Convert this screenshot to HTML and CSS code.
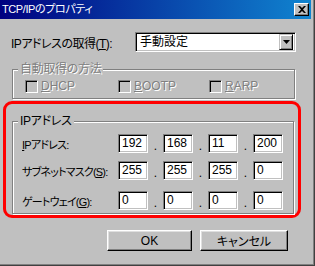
FILE: index.html
```html
<!DOCTYPE html>
<html lang="ja">
<head>
  <meta charset="UTF-8"/>
  <title>TCP/IPのプロパティ</title>
  <link rel="stylesheet" href="styles.css">
</head>
<body>
  <div class="window">
    <div class="titlebar">
      <span class="title">TCP/IPのプロパティ</span>
      <span class="close-btn">
        <svg width="8" height="7" viewBox="0 0 8 7">
          <path d="M0 0 L2 0 L4 2 L6 0 L8 0 L5 3.5 L8 7 L6 7 L4 5 L2 7 L0 7 L3 3.5 Z" fill="#000"/>
        </svg>
      </span>
    </div>

    <div class="mode-row">
      <span class="mode-label">IPアドレスの取得(<u>T</u>):</span>
      <div class="combo">
        <span class="combo-value">手動設定</span>
        <span class="combo-btn">
          <svg width="7" height="4" viewBox="0 0 7 4"><path d="M0 0 H7 L3.5 4 Z" fill="#000"/></svg>
        </span>
      </div>
    </div>

    <!-- disabled group -->
    <fieldset class="group group-auto">
      <legend class="disabled">自動取得の方法</legend>
      <div class="check-row">
        <span class="check"><span class="box"></span><span class="disabled"><u>D</u>HCP</span></span>
        <span class="check"><span class="box"></span><span class="disabled"><u>B</u>OOTP</span></span>
        <span class="check"><span class="box"></span><span class="disabled"><u>R</u>ARP</span></span>
      </div>
    </fieldset>

    <div class="highlight">
      <fieldset class="group group-ip">
        <legend>IPアドレス</legend>

        <div class="ip-row">
          <span class="ip-label"><u>I</u>Pアドレス:</span>
          <div class="ip-fields">
            <span class="octet">192</span><span class="dot">.</span>
            <span class="octet">168</span><span class="dot">.</span>
            <span class="octet">11</span><span class="dot">.</span>
            <span class="octet">200</span>
          </div>
        </div>

        <div class="ip-row">
          <span class="ip-label">サブネットマスク(<u>S</u>):</span>
          <div class="ip-fields">
            <span class="octet">255</span><span class="dot">.</span>
            <span class="octet">255</span><span class="dot">.</span>
            <span class="octet">255</span><span class="dot">.</span>
            <span class="octet">0</span>
          </div>
        </div>

        <div class="ip-row row-gateway">
          <span class="ip-label">ゲートウェイ(<u>G</u>):</span>
          <div class="ip-fields">
            <span class="octet">0</span><span class="dot">.</span>
            <span class="octet">0</span><span class="dot">.</span>
            <span class="octet">0</span><span class="dot">.</span>
            <span class="octet">0</span>
          </div>
        </div>
      </fieldset>
    </div>

    <div class="buttons">
      <button class="btn btn-ok">OK</button>
      <button class="btn btn-cancel">キャンセル</button>
    </div>
  </div>
</body>
</html>
```

FILE: styles.css
```css
:root {
  --face:   #c0c0c0;
  --shadow: #808080;
  --dark:   #404040;
  --light:  #ffffff;
  --font:   "Liberation Sans", "Noto Sans CJK JP", sans-serif;
}

* {
  box-sizing: border-box;
  margin: 0;
  padding: 0;
}

body {
  background: var(--face);
  font-family: var(--font);
  font-size: 12px;
  font-feature-settings: "palt";
  color: #000;
  white-space: nowrap;
}

u { text-decoration: underline; text-underline-offset: 1px; }

.window {
  width: 315px;
  height: 266px;
  background: var(--face);
  border-right: 1px solid var(--dark);
  border-bottom: 1px solid var(--dark);
  box-shadow: inset -1px -1px 0 var(--shadow);
  overflow: hidden;
}

/* Title bar */
.titlebar {
  display: flex;
  align-items: center;
  justify-content: space-between;
  height: 19px;
  margin-right: 3px;
  padding: 0 2px;
  background: linear-gradient(to right, #000080, #1084d0);
}
.title {
  color: #fff;
  font-size: 11px;
  line-height: 19px;
  letter-spacing: -0.4px;
}
.close-btn {
  display: flex;
  align-items: center;
  justify-content: center;
  width: 15px;
  height: 13px;
  background: var(--face);
  border: 1px solid;
  border-color: var(--light) #000 #000 var(--light);
  box-shadow: inset -1px -1px 0 var(--shadow);
}

/* Sunken field */
.combo,
.octet {
  background: #fff;
  border: 1px solid;
  border-color: var(--shadow) var(--light) var(--light) var(--shadow);
  box-shadow: inset 1px 1px 0 #000, inset -1px -1px 0 var(--face);
}

/* Obtain mode row */
.mode-row {
  display: flex;
  align-items: center;
  height: 20px;
  margin-top: 13px;
}
.mode-label {
  width: 135px;
  padding-left: 11px;
  letter-spacing: -0.5px;
}
.combo {
  display: flex;
  align-items: center;
  justify-content: space-between;
  width: 161px;
  height: 20px;
  padding: 2px;
}
.combo-value { padding-left: 2px; line-height: 16px; }
.combo-btn {
  display: flex;
  align-items: center;
  justify-content: center;
  width: 14px;
  height: 16px;
  background: var(--face);
  border: 1px solid;
  border-color: var(--face) #000 #000 var(--face);
  box-shadow: inset 1px 1px 0 var(--light), inset -1px -1px 0 var(--shadow);
}

/* Group boxes */
.group {
  border: 1px solid var(--shadow);
  box-shadow: 1px 1px 0 var(--light), inset 1px 1px 0 var(--light);
  padding: 0 5px;
}
.group legend {
  padding: 0 2px;
  line-height: 14px;
  letter-spacing: -0.3px;
  background: var(--face);
}
.disabled {
  color: var(--shadow);
  text-shadow: 1px 1px 0 var(--light);
}

.group-auto {
  width: 283px;
  margin: 10px 0 0 12px;
  padding-bottom: 5px;
}
.check-row {
  display: grid;
  grid-template-columns: 93px 91px auto;
  margin: 4px 0 0 7px;
}
.check {
  display: flex;
  align-items: center;
  gap: 3px;
  line-height: 13px;
}
.box {
  width: 13px;
  height: 13px;
  background: var(--face);
  border: 1px solid;
  border-color: var(--shadow) var(--light) var(--light) var(--shadow);
  box-shadow: inset 1px 1px 0 #000, inset -1px -1px 0 var(--face);
}

/* Red highlight around the address group */
.highlight {
  width: 298px;
  margin: 2px 0 0 3px;
  padding: 10px 0 1px 6px;
  border: 3px solid #f00;
  border-radius: 9px;
}
.group-ip {
  width: 282px;
  padding-bottom: 3px;
}
.ip-row {
  display: flex;
  align-items: center;
  height: 19px;
  margin-top: 8px;
}
.ip-row:first-of-type { margin-top: 6px; }
.row-gateway { margin-top: 11px; }
.ip-label {
  width: 100px;
  padding-left: 4px;
  font-size: 11px;
  letter-spacing: -0.8px;
}
.ip-fields {
  display: flex;
  align-items: center;
}
.octet {
  width: 30px;
  height: 19px;
  padding-left: 3px;
  line-height: 17px;
}
.dot {
  width: 15px;
  text-align: center;
  align-self: flex-end;
  line-height: 14px;
}

/* Dialog buttons */
.buttons {
  display: flex;
  gap: 8px;
  margin-top: 12px;
  padding-left: 107px;
}
.btn {
  height: 21px;
  font-family: var(--font);
  font-size: 12px;
  font-feature-settings: "palt";
  background: var(--face);
  border: 1px solid;
  border-color: var(--light) #000 #000 var(--light);
  box-shadow: inset -1px -1px 0 var(--shadow), inset 1px 1px 0 #dfdfdf;
}
.btn-ok     { width: 85px; }
.btn-cancel { width: 88px; }
```
